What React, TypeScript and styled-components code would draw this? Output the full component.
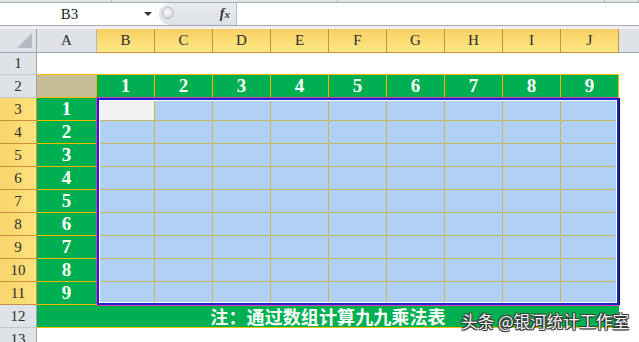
import React from 'react';
import styled, {createGlobalStyle} from "styled-components";

const GlobalStyle = createGlobalStyle`
  html, body {
    margin: 0;
    padding: 0;
    background: #fff;
    overflow: hidden;
  }
  body {
    font-family: 'Liberation Serif', 'Times New Roman', serif;
  }
`

const Page = styled.div`
  position: relative;
  width: 639px;
  height: 342px;
  overflow: hidden;
  background: #fff;
`
const TopStrip = styled.div`
  display: flex;
  height: 3px;
  box-sizing: border-box;
  background: #e1e4e8;
  border-bottom: 1px solid #a9aeb5;
`
const StripPart = styled.div<{ $w?: number }>`
  flex: ${p => p.$w ? 'none' : '1'};
  width: ${p => p.$w ? p.$w + 'px' : 'auto'};
  border-right: 1px solid #b4b8be;
`
const FormulaBar = styled.div`
  display: flex;
  height: 23px;
  box-sizing: border-box;
  border-bottom: 1px solid #a6aab0;
  background: #fff;
`
const NameBox = styled.div`
  position: relative;
  width: 159px;
  display: flex;
  align-items: center;
  justify-content: center;
  padding-right: 20px;
  box-sizing: border-box;
  font-family: 'Liberation Serif', serif;
  font-size: 15px;
  color: #222;

  &::after {
    content: '';
    position: absolute;
    right: 7px;
    top: 9px;
    border-left: 4px solid transparent;
    border-right: 4px solid transparent;
    border-top: 4px solid #333;
  }
`
const FxBox = styled.div`
  position: relative;
  width: 78px;
  display: flex;
  align-items: center;
  justify-content: flex-end;
  padding-right: 6px;
  box-sizing: border-box;
  background: linear-gradient(#e9ecef, #dde0e4);
  border-radius: 11px 0 0 11px;
  border-right: 1px solid #b9bdc2;
`
const Handle = styled.span`
  position: absolute;
  left: 3px;
  top: 4px;
  width: 12px;
  height: 12px;
  border-radius: 50%;
  border: 1px solid #b3b8be;
  background: radial-gradient(circle at 40% 35%, #fdfdfd, #c9cdd2);
  box-sizing: border-box;
`
const Fx = styled.span`
  font-family: 'Liberation Serif', serif;
  font-style: italic;
  font-weight: bold;
  font-size: 14px;
  color: #333;

  small {
    font-size: 11px;
  }
`
const FormulaInput = styled.div`
  flex: 1;
  background: #fff;
`
const Gap = styled.div`
  height: 3px;
  background: #eef0f2;
`

const Sheet = styled.div`
  display: flex;
  flex-direction: column;
  font-family: 'Liberation Serif', serif;
`
const Row = styled.div<{ $h?: number }>`
  display: flex;
  height: ${p => p.$h ?? 23}px;
  flex: none;
`
const Corner = styled.div`
  position: relative;
  width: 37px;
  box-sizing: border-box;
  background: #dfe2e6;
  border-right: 1px solid #9ea4ab;
  border-bottom: 1px solid #9ea4ab;

  &::after {
    content: '';
    position: absolute;
    right: 4px;
    bottom: 4px;
    width: 15px;
    height: 15px;
    background: #b6bac0;
    clip-path: polygon(100% 0, 100% 100%, 0 100%);
  }
`
const ColHead = styled.div<{ $w: number; $on?: boolean }>`
  width: ${p => p.$w}px;
  flex: none;
  box-sizing: border-box;
  display: flex;
  align-items: center;
  justify-content: center;
  font-size: 15px;
  color: #2c2c2c;
  background: ${p => p.$on ? 'linear-gradient(#f8cf63, #fde985)' : '#dfe2e6'};
  border-right: 1px solid ${p => p.$on ? '#c98f3c' : '#b4b9bf'};
  border-bottom: 1px solid ${p => p.$on ? '#c98f3c' : '#9ea4ab'};
`
const HeadFill = styled.div`
  flex: 1;
  background: #dfe2e6;
  border-bottom: 1px solid #9ea4ab;
`
const RowHead = styled.div<{ $on?: boolean }>`
  width: 37px;
  flex: none;
  box-sizing: border-box;
  display: flex;
  align-items: center;
  justify-content: center;
  font-size: 15px;
  color: #2c2c2c;
  background: ${p => p.$on ? 'linear-gradient(90deg, #f9d36b, #fde27c)' : '#dfe2e6'};
  border-right: 1px solid ${p => p.$on ? '#c98f3c' : '#9ea4ab'};
  border-bottom: 1px solid ${p => p.$on ? '#c98f3c' : '#c3c7cc'};
`

type Kind = 'white' | 'tan' | 'green' | 'blue' | 'active'

const kindBg: Record<Kind, string> = {
    white: '#fff',
    tan: '#c4bd97',
    green: '#00b050',
    blue: '#b0d0f4',
    active: '#f2f2f2',
}
const kindLine: Record<Kind, string> = {
    white: '#ffffff',
    tan: '#f2b700',
    green: '#f2b700',
    blue: '#c9b456',
    active: '#c9b456',
}

const Cell = styled.div<{ $w?: number; $kind: Kind; $edge?: string }>`
  width: ${p => p.$w ? p.$w + 'px' : 'auto'};
  flex: none;
  box-sizing: border-box;
  display: flex;
  align-items: center;
  justify-content: center;
  background: ${p => kindBg[p.$kind]};
  border-right: 1px solid ${p => kindLine[p.$kind]};
  border-bottom: 1px solid ${p => p.$edge ?? kindLine[p.$kind]};
  color: #fff;
  font-size: 19px;
  font-weight: bold;
`
const Fill = styled.div`
  flex: 1;
`
const Middle = styled.div`
  display: flex;
`
const LeftCol = styled.div`
  display: flex;
  flex-direction: column;
`
const Selection = styled.div`
  position: relative;
  display: grid;
  grid-template-columns: repeat(9, 58px);
  grid-auto-rows: 23px;

  &::after {
    content: '';
    position: absolute;
    inset: 0;
    border: 2px solid #1b22d8;
    box-shadow: inset 0 0 0 1px #ffffff, -1px -1px 0 0 #e2409c, 0 1px 0 0 #e2409c, 1px 0 0 0 #111;
    pointer-events: none;
  }
`
const ActiveCell = styled(Cell)`
  box-shadow: inset 2px 2px 0 0 #111;
`
const Note = styled(Cell)`
  width: 582px;
  font-family: 'Noto Sans CJK SC', sans-serif;
  font-size: 18px;
  letter-spacing: 0.1px;
  border-right: none;
  border-bottom: 1px solid #f2c200;
`
const Watermark = styled.div`
  position: absolute;
  right: 10px;
  bottom: 9px;
  font-family: 'Noto Sans CJK SC', sans-serif;
  font-size: 16.5px;
  color: #f6f6f6;
  white-space: nowrap;
  text-shadow: 1px 1px 0 #3a3a3a, -1px 1px 0 #3a3a3a, 1px -1px 0 #3a3a3a, -1px -1px 0 #3a3a3a, 0 1px 1px #222;
`

const cols = ['B', 'C', 'D', 'E', 'F', 'G', 'H', 'I', 'J']
const nums = [1, 2, 3, 4, 5, 6, 7, 8, 9]

const App: React.FC = () => {
    return (
        <Page>
            <GlobalStyle/>
            <TopStrip>
                <StripPart $w={111}/>
                <StripPart $w={225}/>
                <StripPart $w={266}/>
                <StripPart/>
            </TopStrip>
            <FormulaBar>
                <NameBox>B3</NameBox>
                <FxBox>
                    <Handle/>
                    <Fx>f<small>x</small></Fx>
                </FxBox>
                <FormulaInput/>
            </FormulaBar>
            <Gap/>
            <Sheet>
                <Row $h={24}>
                    <Corner/>
                    <ColHead $w={60}>A</ColHead>
                    {cols.map(c => <ColHead key={c} $w={58} $on>{c}</ColHead>)}
                    <HeadFill/>
                </Row>
                <Row $h={22}>
                    <RowHead>1</RowHead>
                    <Cell $w={60} $kind="white" $edge="#f2b700"/>
                    {cols.map(c => <Cell key={c} $w={58} $kind="white" $edge="#f2b700"/>)}
                    <Fill/>
                </Row>
                <Row>
                    <RowHead>2</RowHead>
                    <Cell $w={60} $kind="tan"/>
                    {nums.map(n => <Cell key={n} $w={58} $kind="green">{n}</Cell>)}
                    <Fill/>
                </Row>
                <Middle>
                    <LeftCol>
                        {nums.map(n => (
                            <Row key={n}>
                                <RowHead $on>{n + 2}</RowHead>
                                <Cell $w={60} $kind="green">{n}</Cell>
                            </Row>
                        ))}
                    </LeftCol>
                    <Selection>
                        {nums.map(r => cols.map(c => (
                            r === 1 && c === 'B'
                                ? <ActiveCell key={c + r} $kind="active"/>
                                : <Cell key={c + r} $kind="blue"/>
                        )))}
                    </Selection>
                    <Fill/>
                </Middle>
                <Row>
                    <RowHead>12</RowHead>
                    <Note $kind="green">注：通过数组计算九九乘法表</Note>
                    <Fill/>
                </Row>
                <Row>
                    <RowHead>13</RowHead>
                    <Fill/>
                </Row>
            </Sheet>
            <Watermark>头条 @银河统计工作室</Watermark>
        </Page>
    );
};

export default App;
